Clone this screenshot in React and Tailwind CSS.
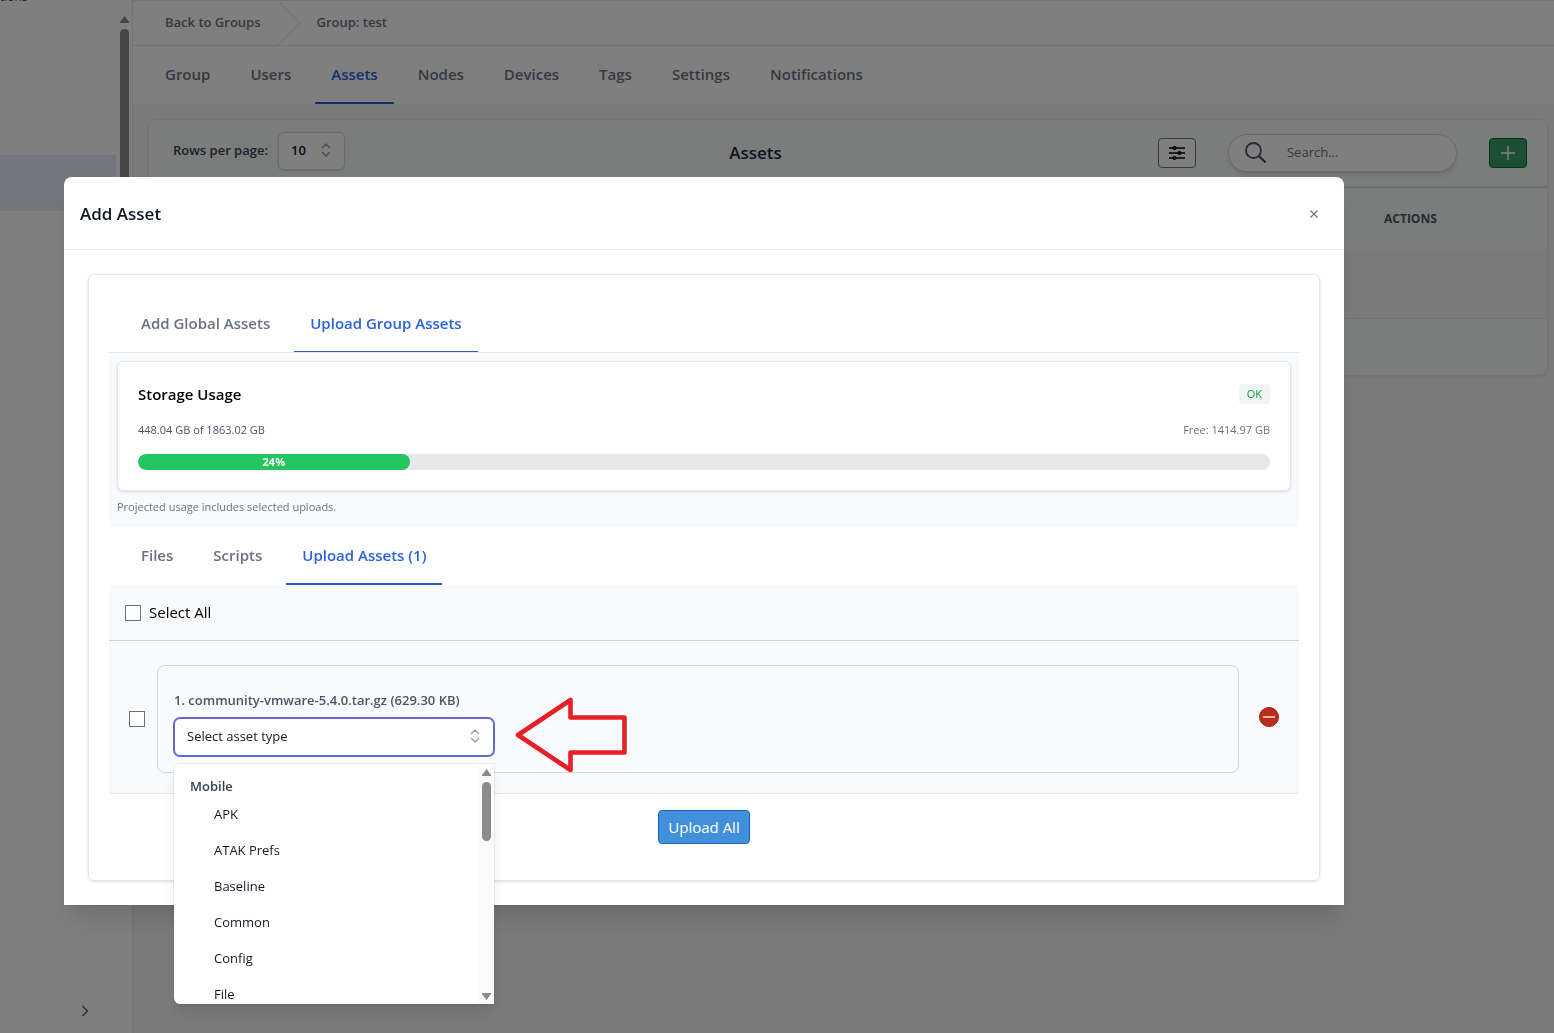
import React, { useState } from 'react';

const groupTabs = ['Group', 'Users', 'Assets', 'Nodes', 'Devices', 'Tags', 'Settings', 'Notifications'];
const assetTypes = ['APK', 'ATAK Prefs', 'Baseline', 'Common', 'Config', 'File'];

const UpDownIcon = ({ className }) => (
  <svg viewBox="0 0 20 20" fill="none" className={className}>
    <path d="M5.500 7.500l3.500-3.500 3.500 3.500M5.500 12.500l3.500 3.500 3.500-3.500" stroke="currentColor" strokeWidth="1.5" strokeLinecap="round" strokeLinejoin="round" />
  </svg>
);

const Tab = ({ label, active, thin, onClick }) => (
  <button
    type="button"
    onClick={onClick}
    className={`whitespace-nowrap px-4 py-4 text-[15px] font-semibold leading-6 ${thin ? 'border-b' : 'border-b-2'} ${
      active ? 'border-[#2a5cc8] text-[#2b62dc]' : 'border-transparent text-gray-500'
    }`}
  >
    {label}
  </button>
);

const Sidebar = () => (
  <aside className="flex w-[133px] shrink-0 border-r border-gray-200 bg-white">
    <div className="flex flex-1 flex-col">
      <div className="flex h-[5px] items-end overflow-hidden text-xs text-gray-700">
        <span>tions</span>
      </div>
      <div className="mt-[150px] h-14 bg-[#ebebff]" />
      <button type="button" aria-label="Expand sidebar" className="mt-auto mb-4 ml-20 w-3 text-gray-600">
        <svg viewBox="0 0 12 12" fill="none" className="h-3 w-3">
          <path d="M2.500 1l5 5-5 5" stroke="currentColor" strokeWidth="1.3" />
        </svg>
      </button>
    </div>
    <div className="flex w-4 flex-col items-center pt-4">
      <svg viewBox="0 0 9 7" className="h-[7px] w-[9px] fill-[#8b8b8b]">
        <path d="M4.500 0L9 6v1H0V6z" />
      </svg>
      <div className="mt-1.5 h-[600px] w-[9px] rounded-full bg-[#8b8b8b]" />
    </div>
  </aside>
);

const GroupPage = () => {
  const [tab, setTab] = useState('Assets');

  return (
    <main className="min-w-0 flex-1 bg-[#f4f4f6]">
      <nav className="flex h-[46px] items-center border-y border-gray-200 bg-white text-[13px] font-semibold text-gray-500">
        <a href="#groups" className="pl-8">Back to Groups</a>
        <svg viewBox="0 0 24 44" fill="none" className="ml-4 h-[44px] w-6 text-gray-200">
          <path d="M1 0l22 22L1 44" stroke="currentColor" />
        </svg>
        <a href="#test" className="ml-4">Group: test</a>
      </nav>
      <div className="flex gap-2 bg-white px-4">
        {groupTabs.map((name) => (
          <Tab key={name} label={name} active={tab === name} onClick={() => setTab(name)} />
        ))}
      </div>
      <section className="mt-4 mr-[7px] ml-4 overflow-hidden rounded-lg bg-[#f7fbf8] shadow-sm ring-1 ring-gray-200">
        <div className="flex items-center justify-between border-b border-gray-200 py-3 pr-5 pl-6">
          <div className="mr-2 flex items-center gap-2.5 pb-1 text-[13px] font-semibold text-gray-700">
            <label htmlFor="rows">Rows per page:</label>
            <div className="relative">
              <select
                id="rows"
                className="block h-[38px] w-[67px] appearance-none rounded-md border border-gray-300 bg-white pl-3 text-[13px] text-gray-900 shadow-sm"
              >
                <option>10</option>
              </select>
              <UpDownIcon className="pointer-events-none absolute top-2 right-2 h-5 w-5 text-gray-400" />
            </div>
          </div>
          <h2 className="text-[17px] font-semibold text-gray-800">Assets</h2>
          <div className="flex items-center gap-8">
            <button type="button" aria-label="Filter columns" className="flex h-[30px] w-[38px] items-center justify-center rounded border border-gray-500 bg-white">
              <svg viewBox="0 0 16 16" fill="none" className="h-4 w-4" stroke="black" strokeWidth="1.6">
                <path d="M0 3h16M0 8h16M0 13h16" />
                <circle cx="5.500" cy="3" r="1.200" fill="white" />
                <circle cx="10.500" cy="8" r="1.200" fill="white" />
                <circle cx="5.500" cy="13" r="1.200" fill="white" />
              </svg>
            </button>
            <div className="flex h-[38px] w-[229px] items-center rounded-full border border-gray-300 bg-white pl-4 shadow-md">
              <svg viewBox="0 0 22 22" fill="none" className="h-[22px] w-[22px] shrink-0 text-gray-600" stroke="currentColor" strokeWidth="1.8">
                <circle cx="8.500" cy="8.500" r="7.500" />
                <path d="M14 14l6.500 6.500" strokeWidth="2.400" />
              </svg>
              <input type="text" aria-label="Search" placeholder="Search..." className="ml-5 w-36 text-[13px] placeholder:text-gray-500" />
            </div>
            <button type="button" aria-label="Add asset" className="flex h-[30px] w-[38px] items-center justify-center rounded border border-green-800 bg-[#389e64] text-white">
              <svg viewBox="0 0 14 14" fill="none" className="h-3.5 w-3.5" stroke="currentColor" strokeWidth="1.5">
                <path d="M7 0v14M0 7h14" />
              </svg>
            </button>
          </div>
        </div>
        <table className="w-full border-t border-gray-300 text-left">
          <thead>
            <tr className="h-[63px]">
              <th className="w-[1235px]" />
              <th className="text-xs font-bold text-gray-600">ACTIONS</th>
            </tr>
          </thead>
          <tbody>
            <tr className="h-[68px] border-b border-gray-200 bg-[#f4f4f6]">
              <td />
              <td />
            </tr>
          </tbody>
        </table>
        <div className="h-14" />
      </section>
    </main>
  );
};

const StorageUsage = ({ used, total }) => {
  const percent = Math.round((used / total) * 100);

  return (
    <div className="bg-gray-50 px-2 pt-2 pb-3">
      <div className="rounded-md border border-gray-200 bg-white p-5 shadow-sm">
        <div className="flex items-center justify-between">
          <h3 className="text-[15px] font-semibold leading-6 text-black">Storage Usage</h3>
          <span className="rounded bg-gray-100 px-2 text-[11px] leading-5 text-green-600">OK</span>
        </div>
        <div className="mt-4 flex justify-between text-[11px] leading-4 text-gray-600">
          <span>{used} GB of {total} GB</span>
          <span className="text-gray-500">Free: 1414.97 GB</span>
        </div>
        <div className="mt-4 h-4 overflow-hidden rounded-full bg-gray-200">
          <div
            className="h-4 rounded-full bg-[#22c55e] text-center text-[11px] font-bold leading-4 text-white"
            style={{ width: `${percent}%` }}
          >
            {percent}%
          </div>
        </div>
      </div>
      <p className="mt-2 text-[11px] leading-4 text-gray-500">Projected usage includes selected uploads.</p>
    </div>
  );
};

const AssetTypeMenu = () => (
  <div className="absolute top-full left-0 z-10 mt-2 flex h-60 w-80 overflow-hidden rounded-l-md bg-white text-[13px] leading-5 shadow-lg ring-1 ring-black/5">
    <div className="flex-1 py-1">
      <div className="px-4 pt-2 font-semibold text-gray-700">Mobile</div>
      <ul>
        {assetTypes.map((type) => (
          <li key={type} className="py-2 pl-10 text-gray-900">{type}</li>
        ))}
      </ul>
    </div>
    <div className="flex w-4 flex-col items-center bg-[#fbfbfb] py-1">
      <svg viewBox="0 0 9 7" className="mt-px h-[7px] w-[9px] fill-[#8b8b8b]">
        <path d="M4.500 0L9 6v1H0V6z" />
      </svg>
      <div className="mt-1.5 h-[59px] w-[9px] rounded-full bg-[#8b8b8b]" />
      <svg viewBox="0 0 9 7" className="mt-auto h-[7px] w-[9px] fill-[#8b8b8b]">
        <path d="M4.500 7L9 1V0H0v1z" />
      </svg>
    </div>
  </div>
);

const UploadRow = () => (
  <div className="flex items-center border-b border-gray-200 bg-gray-50 px-5 pt-6 pb-5">
    <input type="checkbox" aria-label="Select community-vmware-5.4.0.tar.gz" className="h-4 w-4 appearance-none border border-gray-500 bg-white" />
    <div className="ml-3 flex-1 rounded-lg border border-gray-300 px-4 pt-6 pb-4">
      <label htmlFor="asset-type" className="block text-[13px] font-semibold leading-5 text-gray-600">
        1. community-vmware-5.4.0.tar.gz (629.30 KB)
      </label>
      <div className="relative mt-2 w-80">
        <select
          id="asset-type"
          className="block h-[38px] w-full appearance-none rounded-md border border-[#6467cf] bg-white pl-3 text-[13px] text-gray-900 ring-1 ring-[#6467cf]"
        >
          <option>Select asset type</option>
        </select>
        <UpDownIcon className="pointer-events-none absolute top-2 right-2 h-5 w-5 text-gray-400" />
        <AssetTypeMenu />
        <svg viewBox="0 0 112 76" fill="none" className="absolute -top-[21px] left-[341px] h-[76px] w-28">
          <path d="M3 38L55.500 3v17.500H109.500V55.500H55.500V73z" stroke="#e81f27" strokeWidth="4.600" strokeLinejoin="round" />
        </svg>
      </div>
    </div>
    <button type="button" aria-label="Remove file" className="mb-1 ml-5">
      <svg viewBox="0 0 20 20" className="h-5 w-5">
        <circle cx="10" cy="10" r="9.500" fill="#b92d1a" stroke="#96200f" />
        <path d="M4 10h12" stroke="#f5c6be" strokeWidth="1.800" />
      </svg>
    </button>
  </div>
);

const AddAssetModal = () => {
  const [source, setSource] = useState('Upload Group Assets');
  const [section, setSection] = useState('Upload Assets (1)');

  return (
    <div role="dialog" aria-label="Add Asset" className="w-full max-w-7xl self-start rounded-t-lg bg-white shadow-xl">
      <header className="flex h-[73px] items-center justify-between border-b border-gray-200 px-4 pt-0.5">
        <h1 className="text-[17px] font-semibold text-gray-900">Add Asset</h1>
        <button type="button" aria-label="Close" className="p-2.5 text-gray-500">
          <svg viewBox="0 0 8 8" fill="none" className="h-2 w-2" stroke="currentColor" strokeWidth="1.1">
            <path d="M0.500 0.500l7 7M7.500 0.500l-7 7" />
          </svg>
        </button>
      </header>
      <div className="p-6">
        <div className="rounded-md border border-gray-200 p-5 shadow-sm">
          <div className="flex gap-2 border-b border-gray-200 px-4">
            {['Add Global Assets', 'Upload Group Assets'].map((name) => (
              <Tab key={name} thin label={name} active={source === name} onClick={() => setSource(name)} />
            ))}
          </div>
          <StorageUsage used={448.04} total={1863.02} />
          <div className="flex gap-2 px-4">
            {['Files', 'Scripts', 'Upload Assets (1)'].map((name) => (
              <Tab key={name} label={name} active={section === name} onClick={() => setSection(name)} />
            ))}
          </div>
          <div className="flex h-14 items-center border-b border-gray-300 bg-gray-50 px-4">
            <label className="flex items-center gap-2 text-[15px] text-black">
              <input type="checkbox" className="h-4 w-4 appearance-none border border-gray-500 bg-white" />
              Select All
            </label>
          </div>
          <UploadRow />
          <div className="flex justify-center py-4">
            <button type="button" className="h-[34px] w-[92px] whitespace-nowrap rounded border border-[#1f66b5] bg-[#428fdc] text-[15px] text-white">
              Upload All
            </button>
          </div>
        </div>
      </div>
    </div>
  );
};

export default function App() {
  return (
    <div className="flex h-screen overflow-hidden font-['Open_Sans','Noto_Sans',sans-serif]">
      <Sidebar />
      <GroupPage />
      <div className="fixed inset-0 flex bg-black/50 pt-[177px] pl-16">
        <AddAssetModal />
      </div>
    </div>
  );
}
